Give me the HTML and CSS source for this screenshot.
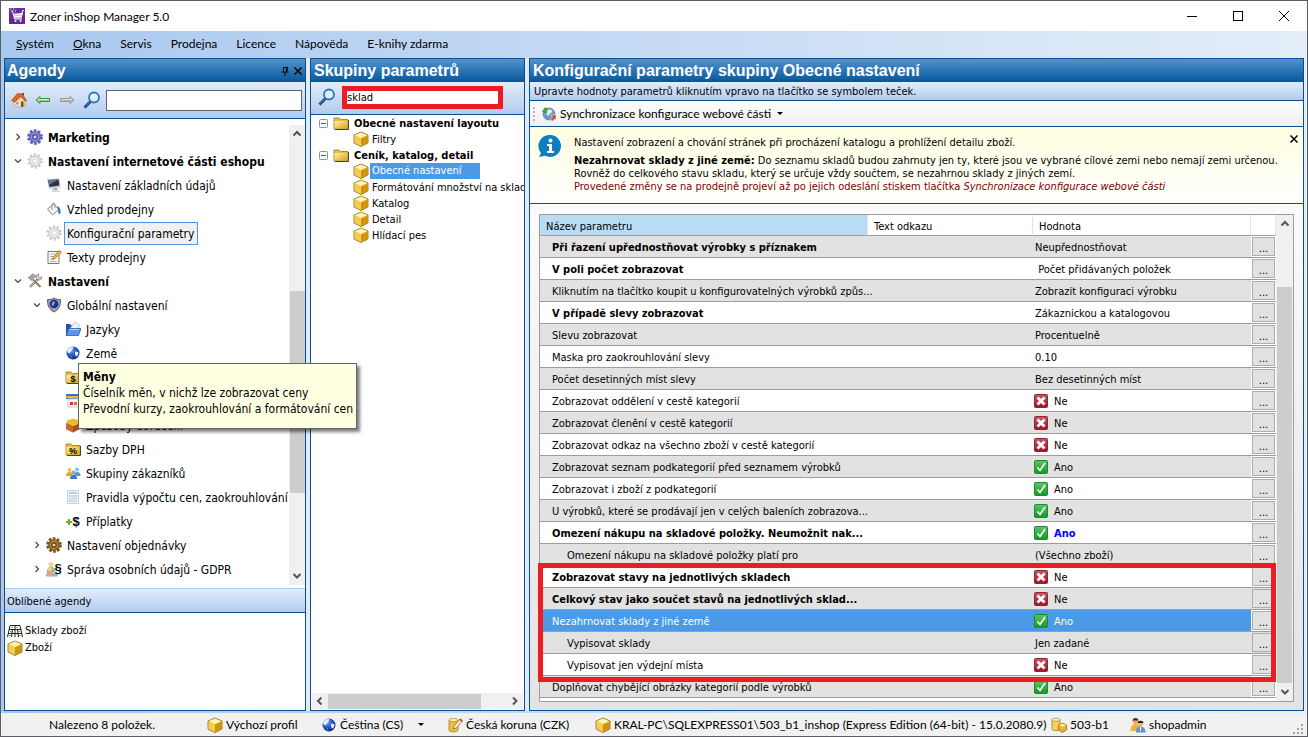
FILE: index.html
```html
<!DOCTYPE html>
<html lang="cs">
  <head>
    <meta charset="UTF-8" />
    <meta name="viewport" content="width=device-width, initial-scale=1.0" />
    <title>Zoner inShop Manager 5.0</title>
    <link rel="stylesheet" href="styles.css">
  </head>
  <body>
    <!-- icon sprite -->
    <svg class="sprite" width="0" height="0" aria-hidden="true">
      <defs>
        <linearGradient id="gGold" x1="0" y1="0" x2="1" y2="1"><stop offset="0" stop-color="#fff3a8"/><stop offset="1" stop-color="#d9a11c"/></linearGradient>
        <linearGradient id="gRed" x1="0" y1="0" x2="0" y2="1"><stop offset="0" stop-color="#c55a66"/><stop offset="1" stop-color="#9c1424"/></linearGradient>
        <linearGradient id="gGreen" x1="0" y1="0" x2="0" y2="1"><stop offset="0" stop-color="#5fc46a"/><stop offset="1" stop-color="#129a22"/></linearGradient>
        <radialGradient id="gGlobe" cx="0.35" cy="0.3" r="0.8"><stop offset="0" stop-color="#7fb0f0"/><stop offset="0.5" stop-color="#1f55c0"/><stop offset="1" stop-color="#08206c"/></radialGradient>
      </defs>
      <symbol id="cart" viewBox="0 0 16 16">
        <rect width="16" height="16" fill="#6f2f9f"/><path d="M0 16V6L16 0v16z" fill="#5a1f8c" opacity=".5"/>
        <path d="M4.5 6.500 5.500 10.500h7l1.500-6" fill="#d9c6ea"/><path d="M2 3h1.500l2 8h7.500M5 6h8.500M5.500 8.500h7.500M15 2.500h-1.500l-.8 5" fill="none" stroke="#fff"/>
        <circle cx="6.500" cy="13" r="1" fill="#fff"/><circle cx="11.500" cy="13" r="1" fill="#fff"/><path d="M1 1h1M4 1h1M6 3h1" stroke="#fff"/>
      </symbol>
      <symbol id="home" viewBox="0 0 16 16">
        <path d="M3 8.500 9 4l5 4.500V14l-6 1.500L3 13z" fill="#f4e0b8" stroke="#b98f58" stroke-width=".6"/>
        <path d="M.5 8.500 6.500 1.500 11 2l4.500 6.500-1.200.8L10 4.500 4 10z" fill="#e06a25" stroke="#8e3410" stroke-width=".6"/>
        <path d="M10 9.500h2.500v5L10 15z" fill="#7a4a1e"/><path d="M5 10h2.500v2.500H5z" fill="#7fa6cf"/><path d="M11 1h2v3l-2-1.500z" fill="#9e3a17"/>
      </symbol>
      <symbol id="back" viewBox="0 0 16 16"><path d="M1 8 5 4.500V6.500h9.500v3H5V11.500z" fill="#8fd07c" stroke="#3f9436"/><path d="M3 7.500h11" stroke="#d5f3cb"/></symbol>
      <symbol id="forward" viewBox="0 0 16 16"><path d="M15 8 11 4.500V6.500H1.500v3H11V11.500z" fill="#b8b8b8" stroke="#989898"/><path d="M2 7.500h11" stroke="#dcdcdc"/></symbol>
      <symbol id="magnifier" viewBox="0 0 18 18">
        <path d="M1.500 16.500 8 10" stroke="#22437a" stroke-width="3"/><path d="M2 15.500 7.500 10" stroke="#5c88bd"/>
        <circle cx="11" cy="6.500" r="5" fill="#dcecfa" stroke="#2a78b8" stroke-width="1.800"/><path d="M8.500 5.500a3 3 0 0 1 3-2" stroke="#fff" fill="none"/>
      </symbol>
      <symbol id="gear" viewBox="0 0 16 16">
        <circle cx="8" cy="8" r="6.500" fill="none" stroke="currentColor" stroke-width="2.600" stroke-dasharray="2.700 1.384"/>
        <circle cx="8" cy="8" r="5.800" fill="currentColor"/><circle cx="8" cy="8" r="3.800" fill="none" stroke="#fff" stroke-opacity=".4" stroke-width="1.200"/><circle cx="8" cy="8" r="1.300" fill="#fff" fill-opacity=".8"/>
      </symbol>
      <symbol id="gearLight" viewBox="0 0 16 16">
        <circle cx="8" cy="8" r="6.500" fill="none" stroke="#c9c9c9" stroke-width="2.400" stroke-dasharray="2.100 1.980"/>
        <circle cx="8" cy="8" r="5" fill="#f1f1f1" stroke="#cdcdcd" stroke-width="1.400"/><circle cx="8" cy="8" r="2.400" fill="#fff" stroke="#d0d0d0"/>
      </symbol>
      <symbol id="monitor" viewBox="0 0 16 16">
        <path d="M1 2 13.500 1.500l1 9L3 12z" fill="#c9ced6"/><path d="M2 3 12.600 2.500l.8 6L3.500 10z" fill="#2a3444"/><path d="M2 3 12.600 2.500 3 8z" fill="#66758a"/>
        <path d="M8 11h3l1 2.500H6.500z" fill="#a9afb8"/><path d="M5 13.500h9V15H6z" fill="#d4d8dd"/>
      </symbol>
      <symbol id="bucket" viewBox="0 0 16 16">
        <path d="M1.500 8 8 3l5 5.500L6.500 14z" fill="#f4f4f4" stroke="#8b8b8b"/><path d="M6 9V3.500a1.500 1.500 0 0 1 3 0V7" fill="none" stroke="#999"/>
        <path d="M11 5.500c2 0 4 1.500 3.500 7L12.500 13l-.500-4z" fill="#3e6fb2"/>
      </symbol>
      <symbol id="note" viewBox="0 0 16 16">
        <path d="M2 2.500h11v12H2z" fill="#fff" stroke="#777"/><path d="M4 5h7M4 7.500h5M4 10h4M4 12.500h7" stroke="#aaa"/>
        <path d="m6.500 10.500.8-2.500 6-6.500 2 1.800-6.300 6.500z" fill="#f2b93c" stroke="#966b16" stroke-width=".7"/><path d="m12.500 2.200 1-1.200 2 1.800-1 1.200z" fill="#d88"/>
      </symbol>
      <symbol id="tools" viewBox="0 0 16 16">
        <path d="M3 14 12 5" stroke="#6d6d6d" stroke-width="2.400"/><path d="M3 14 12 5" stroke="#dcdcdc"/><path d="M15 3.500a3 3 0 1 1-3-2.500l-.5 2.500 1.500 1z" fill="#d0d0d0" stroke="#777" stroke-width=".6"/>
        <path d="M6 6.500 13.500 14" stroke="#9b7a5e" stroke-width="2"/><path d="m1 5 4.500-4L9 3 4 7.500 3 5.500z" fill="#a9a9a9" stroke="#555" stroke-width=".5"/>
      </symbol>
      <symbol id="shield" viewBox="0 0 16 16">
        <path d="M8 1c2 1.500 4 1.500 6.500 1.500 0 6-1.500 10-6.500 12.500C3 12.500 1.500 8.500 1.500 2.500 4 2.500 6 2.500 8 1z" fill="#9da1a8" stroke="#575b63"/>
        <circle cx="8" cy="7" r="4.300" fill="#1b2f88"/><path d="M6 5.500c1-1.500 3-1.500 3 0s-1.500 1-1 2.500-2 1-2.500-.5z" fill="#7fa2e4"/>
      </symbol>
      <symbol id="blueFolder" viewBox="0 0 16 16">
        <path d="M1 3h4l1.500 1.500H13V14H1z" fill="#2356b4"/><path d="M4.500 8 10 1l4.500 3-3 6z" fill="#eef5ff" stroke="#7da5d9" stroke-width=".6"/><path d="M3.500 7.500H16L13.500 14.500H1z" fill="#5a97e6" stroke="#1f4e9e" stroke-width=".7"/><path d="M4.500 8.500h9" stroke="#b9d6fa"/>
      </symbol>
      <symbol id="globe" viewBox="0 0 16 16">
        <circle cx="8" cy="8" r="6.500" fill="url(#gGlobe)"/><path d="M2 5.500C3.500 3 6 1.700 8 2c.8 1-.5 2-1 3S5.500 7 4.500 8 2.500 7.500 2 5.500zM10 7c1-1 2.500-.5 3.500.5 0 2-.8 3-2 4-1.500.5-.500-1.500-1.500-2zM6 11.500c1 0 1.500.500 1 1.500z" fill="#e3eefc"/>
      </symbol>
      <symbol id="folder" viewBox="0 0 16 16">
        <path d="M1 4V3h5l1.500 1.500H15V14H1z" fill="#edbd42" stroke="#9a7420" stroke-width=".8"/><path d="M1.500 6h13v7.500h-13z" fill="url(#gGold)"/><path d="M15.500 5v9.500H2" fill="none" stroke="#444"/>
      </symbol>
      <symbol id="card" viewBox="0 0 16 16">
        <path d="M1 1h14v5H1z" fill="#3a6fd0"/><path d="M1 3h14v2H1z" fill="#f3b51e"/><path d="M3 6h12v8H3z" fill="#f4f4f4" stroke="#ccc"/><path d="M5 9h3v3H5z" fill="#d7342d"/><path d="M9 9h3v3H9z" fill="#e5662a"/>
      </symbol>
      <symbol id="openBox" viewBox="0 0 16 16">
        <path d="M1 6 8 9l7-3v6l-7 3.500L1 12z" fill="#a9501c"/><path d="m2 3.500 6-2 6 2v3L8 9 2 6.500z" fill="#f0bb2a"/><path d="M1 6 8 9v6.500L1 12z" fill="#c76a2a"/>
      </symbol>
      <symbol id="people" viewBox="0 0 16 16">
        <circle cx="4.500" cy="5" r="2" fill="#f2c14a"/><path d="M1 11c0-3 1.500-4 3.500-4s3.500 1 3.500 4z" fill="#efa51b"/>
        <circle cx="12" cy="4.500" r="2" fill="#8ab9ec"/><path d="M9 11c0-3 1-4 3.200-4S15.500 8 15.500 11z" fill="#5b95d8"/>
        <circle cx="8.500" cy="7.500" r="2" fill="#7cb0ea"/><path d="M5 14c0-3 1.500-4 3.500-4s3.500 1 3.500 4z" fill="#3577c8"/>
      </symbol>
      <symbol id="calc" viewBox="0 0 16 16">
        <path d="M2.500 1.500h11v13h-11z" fill="#f3f5f8" stroke="#c6ced9"/><path d="M4 3h8v2H4z" fill="#b8cfe4"/><path d="M4 7h8M4 9.500h8M4 12h8" stroke="#b3c5d8" stroke-width="1.500" stroke-dasharray="1.500 .7"/>
      </symbol>
      <symbol id="shelves" viewBox="0 0 16 16">
        <path d="M3 2.500h10M2 6.500h12M1 10.500h14M3 2.500 .500 14M8 2.500V14M13 2.500l2.500 11.500M5.500 6.500 4.500 14M10.500 6.500l1 7.500" stroke="#222" fill="none"/><path d="M4 4.500h2M9 4.500h2M3 8.500h2M7 8.500h2M11 8.500h2M2 12.500h2M7 12.500h2M12 12.500h2" stroke="#999"/>
      </symbol>
      <symbol id="box" viewBox="0 0 16 16">
        <path d="M8 1 15 4v8l-7 3.500L1 12V4z" fill="#e7b52c" stroke="#8b6510" stroke-width=".8"/><path d="M8 1.500 14.500 4.200 8 7.200 1.500 4.200z" fill="#fff3ae"/><path d="M1.500 4.500 8 7.500V15l-6.500-3.200z" fill="#f2cd51"/><path d="M14.500 4.500 8 7.500V15l6.500-3.200z" fill="#cf9413"/>
      </symbol>
      <symbol id="yes" viewBox="0 0 16 16">
        <rect x="1.500" y="1.500" width="13" height="13" rx="1" fill="url(#gGreen)" stroke="#1d8a2b"/><path d="m4.500 8.500 2.500 3L12 4" fill="none" stroke="#fff" stroke-width="1.600"/>
      </symbol>
      <symbol id="no" viewBox="0 0 16 16">
        <rect x="1.500" y="1.500" width="13" height="13" rx="1" fill="url(#gRed)" stroke="#93232f"/><path d="m4.500 4.500 7 7M11.500 4.500l-7 7" stroke="#fff" stroke-width="2.800"/>
      </symbol>
      <symbol id="sync" viewBox="0 0 16 16">
        <circle cx="8" cy="8" r="6" fill="#6f9bcb" stroke="#49698e" stroke-width=".6"/><path d="M5 5c2-2 5-2 6 0s-3 2-3 4-3 0-3-4z" fill="#e9f1f9"/><path d="M1 5.500 4 1l4 3-2 .5.500 2.500L3 7z" fill="#48a23c"/>
        <path d="M10 9h5v5l-1.500-1-2.500 2.500L9.500 13l2-1.500z" fill="#d7452c" stroke="#fff" stroke-width=".5"/>
      </symbol>
      <symbol id="info" viewBox="0 0 24 24">
        <path d="M12 1a11 11 0 1 1-5 20.800L1 23l2-4A11 11 0 0 1 12 1z" fill="#0c7dc0"/><circle cx="12.500" cy="6.500" r="2" fill="#fff"/><path d="M9 10h5v7h2v2H9v-2h2v-5H9z" fill="#fff"/>
      </symbol>
      <symbol id="dbPencil" viewBox="0 0 16 16">
        <path d="M2 3v10c0 2.500 9 2.500 9 0V3z" fill="#eabf49" stroke="#94701b" stroke-width=".7"/><ellipse cx="6.500" cy="3" rx="4.500" ry="1.700" fill="#fff1b2" stroke="#94701b" stroke-width=".6"/><path d="m6 12 1-3 6-7 2.500 2-6 7z" fill="#fbe9b5" stroke="#8a6320" stroke-width=".7"/><path d="m12.200 2.800 1-1.300 2.500 2-1 1.300z" fill="#c34"/>
      </symbol>
      <symbol id="dbBox" viewBox="0 0 16 16">
        <path d="M1 2.500v9.500c0 2.200 8 2.200 8 0V2.500z" fill="#f1cf64" stroke="#94701b" stroke-width=".7"/><ellipse cx="5" cy="2.700" rx="4" ry="1.600" fill="#fff4c4" stroke="#94701b" stroke-width=".6"/>
        <path d="m11.500 6 4 2v5l-4 2.500-4-2.500V8z" fill="#e7b52c" stroke="#8b6510" stroke-width=".7"/><path d="m11.500 6.500 3.500 1.700-3.500 1.800L8 8.200z" fill="#fff0a0"/>
      </symbol>
      <symbol id="users" viewBox="0 0 16 16">
        <circle cx="5.500" cy="4" r="3" fill="#e2ab78"/><path d="M2.500 3.500C3 0 8 0 8.500 3.500z" fill="#4a2c14"/><path d="M.500 14c0-5 2-7 5-7s5 2 5 7z" fill="#eeb42d"/>
        <circle cx="10.500" cy="6.500" r="2.800" fill="#e8b688"/><path d="M7.500 6C8 3 13 3 13.500 6z" fill="#2c1c10"/><path d="M6 15.500c0-4.500 2-6 4.500-6s5 1.500 5 6z" fill="#5c94da"/><path d="M10.500 10v4" stroke="#fff"/>
      </symbol>
      <symbol id="right" viewBox="0 0 8 8"><path d="m2.500 1 3 3-3 3" fill="none" stroke="#444" stroke-width="1.200"/></symbol>
      <symbol id="down" viewBox="0 0 8 8"><path d="m1 2.500 3 3 3-3" fill="none" stroke="#444" stroke-width="1.200"/></symbol>
      <symbol id="thickUp" viewBox="0 0 10 10"><path d="m1.500 6.500 3.500-3.500 3.500 3.500" fill="none" stroke="#555" stroke-width="2"/></symbol>
      <symbol id="thickDown" viewBox="0 0 10 10"><path d="m1.500 3 3.500 3.500L8.500 3" fill="none" stroke="#555" stroke-width="2"/></symbol>
      <symbol id="thickLeft" viewBox="0 0 10 10"><path d="M6.500 1.500 3 5l3.500 3.500" fill="none" stroke="#555" stroke-width="2"/></symbol>
      <symbol id="thickRight" viewBox="0 0 10 10"><path d="M3 1.500 6.500 5 3 8.500" fill="none" stroke="#555" stroke-width="2"/></symbol>
      <symbol id="minus" viewBox="0 0 9 9"><rect x=".5" y=".5" width="8" height="8" rx="1" fill="#f8f8f8" stroke="#919191"/><path d="M2 4.500h5" stroke="#3a5fae"/></symbol>
      <symbol id="cross" viewBox="0 0 10 10"><path d="m1.500 1.500 7 7M8.500 1.500l-7 7" stroke="#000" stroke-width="1.500"/></symbol>
      <symbol id="pin" viewBox="0 0 10 10"><path d="M3 1.500h4.500M3.500 1.500v4M6.500 1v4.500M7.200 1v4.500M1.500 6h7M5 6v4" stroke="#000"/></symbol>
      <symbol id="winMin" viewBox="0 0 12 12"><path d="M1 6.500h10" stroke="#000"/></symbol>
      <symbol id="winMax" viewBox="0 0 12 12"><rect x="1.500" y="1.500" width="9" height="9" fill="none" stroke="#000"/></symbol>
      <symbol id="winClose" viewBox="0 0 12 12"><path d="m1 1 10 10M11 1 1 11" stroke="#000"/></symbol>
    </svg>

    <header class="titlebar">
      <svg class="icon"><use href="#cart"/></svg>
      <h1>Zoner inShop Manager 5.0</h1>
      <div class="window-buttons">
        <button aria-label="Minimalizovat"><svg><use href="#winMin"/></svg></button>
        <button aria-label="Maximalizovat"><svg><use href="#winMax"/></svg></button>
        <button aria-label="Zavřít"><svg><use href="#winClose"/></svg></button>
      </div>
    </header>

    <nav class="menubar">
      <a href="#"><u>S</u>ystém</a>
      <a href="#"><u>O</u>kna</a>
      <a href="#">Servis</a>
      <a href="#">Prodejna</a>
      <a href="#">Licence</a>
      <a href="#">Nápověda</a>
      <a href="#">E-knihy zdarma</a>
    </nav>

    <main class="workspace">
      <section class="panel agendas">
        <header class="panel-header">
          <h2>Agendy</h2>
          <button aria-label="Připnout"><svg><use href="#pin"/></svg></button>
          <button aria-label="Zavřít panel"><svg><use href="#cross"/></svg></button>
        </header>
        <div class="searchbar">
          <button aria-label="Domů"><svg class="icon"><use href="#home"/></svg></button>
          <button aria-label="Zpět"><svg class="icon"><use href="#back"/></svg></button>
          <button aria-label="Vpřed"><svg class="icon"><use href="#forward"/></svg></button>
          <label for="agendaSearch" aria-label="Hledat agendu"><svg class="magnifier"><use href="#magnifier"/></svg></label>
          <input type="text" id="agendaSearch">
        </div>
        <div class="tree-wrap">
          <ul class="tree">
            <li class="top"><svg class="arrow"><use href="#right"/></svg><svg class="icon violet"><use href="#gear"/></svg><a href="#">Marketing</a></li>
            <li class="top"><svg class="arrow"><use href="#down"/></svg><svg class="icon"><use href="#gearLight"/></svg><a href="#">Nastavení internetové části eshopu</a></li>
            <li class="sub"><span class="arrow"></span><svg class="icon"><use href="#monitor"/></svg><a href="#">Nastavení základních údajů</a></li>
            <li class="sub"><span class="arrow"></span><svg class="icon"><use href="#bucket"/></svg><a href="#">Vzhled prodejny</a></li>
            <li class="sub current"><span class="arrow"></span><svg class="icon"><use href="#gearLight"/></svg><a href="#">Konfigurační parametry</a></li>
            <li class="sub"><span class="arrow"></span><svg class="icon"><use href="#note"/></svg><a href="#">Texty prodejny</a></li>
            <li class="top"><svg class="arrow"><use href="#down"/></svg><svg class="icon"><use href="#tools"/></svg><a href="#">Nastavení</a></li>
            <li class="sub"><svg class="arrow"><use href="#down"/></svg><svg class="icon"><use href="#shield"/></svg><a href="#">Globální nastavení</a></li>
            <li class="leaf"><svg class="icon"><use href="#blueFolder"/></svg><a href="#">Jazyky</a></li>
            <li class="leaf"><svg class="icon"><use href="#globe"/></svg><a href="#">Země</a></li>
            <li class="leaf has-tip">
              <svg class="icon" viewBox="0 0 16 16"><use href="#folder"/><text x="8" y="13" class="glyph" text-anchor="middle">$</text></svg>
              <div class="tooltip" role="tooltip">
                <strong>Měny</strong>
                <p>Číselník měn, v nichž lze zobrazovat ceny</p>
                <p>Převodní kurzy, zaokrouhlování a formátování cen</p>
              </div>
            </li>
            <li class="leaf"><svg class="icon"><use href="#card"/></svg></li>
            <li class="leaf"><svg class="icon"><use href="#openBox"/></svg><a href="#">Způsoby doručení</a></li>
            <li class="leaf"><svg class="icon" viewBox="0 0 16 16"><use href="#folder"/><text x="8" y="13" class="glyph" text-anchor="middle">%</text></svg><a href="#">Sazby DPH</a></li>
            <li class="leaf"><svg class="icon"><use href="#people"/></svg><a href="#">Skupiny zákazníků</a></li>
            <li class="leaf"><svg class="icon"><use href="#calc"/></svg><a href="#">Pravidla výpočtu cen, zaokrouhlování</a></li>
            <li class="leaf"><svg class="icon" viewBox="0 0 16 16"><path d="M1 9h6M4 6v6" stroke="#5fb336" stroke-width="2"/><text x="11" y="13" class="glyph glyph-big" text-anchor="middle">$</text></svg><a href="#">Příplatky</a></li>
            <li class="sub"><svg class="arrow"><use href="#right"/></svg><svg class="icon brown"><use href="#gear"/></svg><a href="#">Nastavení objednávky</a></li>
            <li class="sub"><svg class="arrow"><use href="#right"/></svg><svg class="icon" viewBox="0 0 16 16"><circle cx="5" cy="3.500" r="2.500" fill="#f3cfa8"/><path d="M1 11c0-4 1.500-5 4-5s4 1 4 5z" fill="#7fc274"/><circle cx="4" cy="8.500" r="2" fill="#f3cfa8"/><path d="M0 15.500c0-4 1.500-5 4-5s4 1 4 5z" fill="#ef9b86"/><path d="M6 15.500c0-3 1-4 3-4s3 1 3 4z" fill="#8ab5e8"/><text x="12" y="12" class="glyph glyph-big" text-anchor="middle">§</text></svg><a href="#">Správa osobních údajů - GDPR</a></li>
          </ul>
          <div class="scroll scroll-tree">
            <svg><use href="#thickUp"/></svg><i class="before"></i><i class="thumb"></i><i class="after"></i><svg><use href="#thickDown"/></svg>
          </div>
        </div>
        <h3 class="favorites-title">Oblíbené agendy</h3>
        <ul class="favorites">
          <li><svg class="icon"><use href="#shelves"/></svg><a href="#">Sklady zboží</a></li>
          <li><svg class="icon"><use href="#box"/></svg><a href="#">Zboží</a></li>
        </ul>
      </section>

      <section class="panel groups">
        <header class="panel-header"><h2>Skupiny parametrů</h2></header>
        <div class="searchbar">
          <label for="groupSearch" aria-label="Hledat parametr"><svg class="magnifier"><use href="#magnifier"/></svg></label>
          <input type="text" id="groupSearch" value="sklad">
        </div>
        <ul class="group-tree">
          <li class="root"><svg class="toggle"><use href="#minus"/></svg><svg class="icon"><use href="#folder"/></svg><a href="#">Obecné nastavení layoutu</a></li>
          <li><svg class="icon"><use href="#box"/></svg><a href="#">Filtry</a></li>
          <li class="root"><svg class="toggle"><use href="#minus"/></svg><svg class="icon"><use href="#folder"/></svg><a href="#">Ceník, katalog, detail</a></li>
          <li class="selected"><svg class="icon"><use href="#box"/></svg><a href="#">Obecné nastavení</a></li>
          <li><svg class="icon"><use href="#box"/></svg><a href="#">Formátování množství na skladě</a></li>
          <li><svg class="icon"><use href="#box"/></svg><a href="#">Katalog</a></li>
          <li><svg class="icon"><use href="#box"/></svg><a href="#">Detail</a></li>
          <li><svg class="icon"><use href="#box"/></svg><a href="#">Hlídací pes</a></li>
        </ul>
        <div class="scroll scroll-groups">
          <svg><use href="#thickLeft"/></svg><i class="thumb"></i><i class="after"></i><svg><use href="#thickRight"/></svg>
        </div>
      </section>

      <section class="panel params">
        <header class="panel-header"><h2>Konfigurační parametry skupiny Obecné nastavení</h2></header>
        <p class="hint">Upravte hodnoty parametrů kliknutím vpravo na tlačítko se symbolem teček.</p>
        <div class="toolbar">
          <span class="grip"></span>
          <button><svg class="icon"><use href="#sync"/></svg>Synchronizace konfigurace webové části<span class="caret"></span></button>
        </div>
        <div class="info">
          <svg class="info-icon"><use href="#info"/></svg>
          <div class="info-text">
            <p class="lead">Nastavení zobrazení a chování stránek při procházení katalogu a prohlížení detailu zboží.</p>
            <p><b>Nezahrnovat sklady z jiné země:</b> Do seznamu skladů budou zahrnuty jen ty, které jsou ve vybrané cílové zemi nebo nemají zemi určenou.</p>
            <p>Rovněž do celkového stavu skladu, který se určuje vždy součtem, se nezahrnou sklady z jiných zemí.</p>
            <p class="warning">Provedené změny se na prodejně projeví až po jejich odeslání stiskem tlačítka <em>Synchronizace konfigurace webové části</em></p>
          </div>
          <button aria-label="Zavřít nápovědu"><svg><use href="#cross"/></svg></button>
        </div>
        <div class="grid-area">
          <div class="grid">
            <table>
              <colgroup><col class="col-name"><col class="col-link"><col><col class="col-button"></colgroup>
              <thead>
                <tr><th class="sorted">Název parametru</th><th>Text odkazu</th><th>Hodnota</th><th></th></tr>
              </thead>
              <tbody>
                <tr><td><b>Při řazení upřednostňovat výrobky s příznakem</b></td><td></td><td>Neupřednostňovat</td><td><button>...</button></td></tr>
                <tr><td><b>V poli počet zobrazovat</b></td><td></td><td>&nbsp;Počet přidávaných položek</td><td><button>...</button></td></tr>
                <tr><td>Kliknutím na tlačítko koupit u konfigurovatelných výrobků způs...</td><td></td><td>Zobrazit konfiguraci výrobku</td><td><button>...</button></td></tr>
                <tr><td><b>V případě slevy zobrazovat</b></td><td></td><td>Zákaznickou a katalogovou</td><td><button>...</button></td></tr>
                <tr><td>Slevu zobrazovat</td><td></td><td>Procentuelně</td><td><button>...</button></td></tr>
                <tr><td>Maska pro zaokrouhlování slevy</td><td></td><td>0.10</td><td><button>...</button></td></tr>
                <tr><td>Počet desetinných míst slevy</td><td></td><td>Bez desetinných míst</td><td><button>...</button></td></tr>
                <tr><td>Zobrazovat oddělení v cestě kategorií</td><td></td><td><span class="flag"><svg class="icon"><use href="#no"/></svg>Ne</span></td><td><button>...</button></td></tr>
                <tr><td>Zobrazovat členění v cestě kategorií</td><td></td><td><span class="flag"><svg class="icon"><use href="#no"/></svg>Ne</span></td><td><button>...</button></td></tr>
                <tr><td>Zobrazovat odkaz na všechno zboží v cestě kategorií</td><td></td><td><span class="flag"><svg class="icon"><use href="#no"/></svg>Ne</span></td><td><button>...</button></td></tr>
                <tr><td>Zobrazovat seznam podkategorií před seznamem výrobků</td><td></td><td><span class="flag"><svg class="icon"><use href="#yes"/></svg>Ano</span></td><td><button>...</button></td></tr>
                <tr><td>Zobrazovat i zboží z podkategorií</td><td></td><td><span class="flag"><svg class="icon"><use href="#yes"/></svg>Ano</span></td><td><button>...</button></td></tr>
                <tr><td>U výrobků, které se prodávají jen v celých baleních zobrazova...</td><td></td><td><span class="flag"><svg class="icon"><use href="#yes"/></svg>Ano</span></td><td><button>...</button></td></tr>
                <tr><td><b>Omezení nákupu na skladové položky. Neumožnit nak...</b></td><td></td><td class="changed"><span class="flag"><svg class="icon"><use href="#yes"/></svg>Ano</span></td><td><button>...</button></td></tr>
                <tr><td class="nested">Omezení nákupu na skladové položky platí pro</td><td></td><td>(Všechno zboží)</td><td><button>...</button></td></tr>
              </tbody>
              <tbody class="marked">
                <tr><td><b>Zobrazovat stavy na jednotlivých skladech</b></td><td></td><td><span class="flag"><svg class="icon"><use href="#no"/></svg>Ne</span></td><td><button>...</button></td></tr>
                <tr><td><b>Celkový stav jako součet stavů na jednotlivých sklad...</b></td><td></td><td><span class="flag"><svg class="icon"><use href="#no"/></svg>Ne</span></td><td><button>...</button></td></tr>
                <tr class="selected"><td>Nezahrnovat sklady z jiné země</td><td></td><td><span class="flag"><svg class="icon"><use href="#yes"/></svg>Ano</span></td><td><button>...</button></td></tr>
                <tr><td class="nested">Vypisovat sklady</td><td></td><td>Jen zadané</td><td><button>...</button></td></tr>
                <tr><td class="nested">Vypisovat jen výdejní místa</td><td></td><td><span class="flag"><svg class="icon"><use href="#no"/></svg>Ne</span></td><td><button>...</button></td></tr>
              </tbody>
              <tbody>
                <tr><td>Doplňovat chybějící obrázky kategorií podle výrobků</td><td></td><td><span class="flag"><svg class="icon"><use href="#yes"/></svg>Ano</span></td><td><button>...</button></td></tr>
              </tbody>
            </table>
            <div class="scroll scroll-grid">
              <svg><use href="#thickUp"/></svg><i class="before"></i><i class="thumb"></i><svg><use href="#thickDown"/></svg>
            </div>
          </div>
        </div>
      </section>
    </main>

    <footer class="statusbar">
      <span class="found">Nalezeno 8 položek.</span>
      <span><svg class="icon"><use href="#box"/></svg>Výchozí profil</span>
      <span><svg class="icon"><use href="#globe"/></svg>Čeština (CS)<i class="caret"></i></span>
      <span><svg class="icon"><use href="#dbPencil"/></svg>Česká koruna (CZK)</span>
      <span><svg class="icon"><use href="#box"/></svg>KRAL-PC\SQLEXPRESS01\503_b1_inshop (Express Edition (64-bit) - 15.0.2080.9)</span>
      <span><svg class="icon"><use href="#dbBox"/></svg>503-b1</span>
      <span><svg class="icon"><use href="#users"/></svg>shopadmin</span>
      <svg class="resize" viewBox="0 0 12 12"><path d="M9 1h2M5 5h2M9 5h2M1 9h2M5 9h2M9 9h2" stroke="#a5a5a5" stroke-width="2"/></svg>
    </footer>
  </body>
</html>
```

FILE: styles.css
```css
/* styles.css */
* {
  box-sizing: border-box;
}

body {
  margin: 0;
  height: 100vh;
  display: flex;
  flex-direction: column;
  overflow: hidden;
  border: 1px solid #5c5c66;
  background: linear-gradient(to right, #a9c8ef, #e4eef9);
  font-family: "DejaVu Sans Condensed", "DejaVu Sans", sans-serif;
  font-size: 11px;
  color: #000;
}

h1, h2, h3, p, ul {
  margin: 0;
  padding: 0;
  font-weight: normal;
  list-style: none;
}

a {
  color: inherit;
  text-decoration: none;
}

svg {
  display: block;
  flex: none;
}

button {
  padding: 0;
  border: none;
  background: none;
  font: inherit;
  color: inherit;
  flex: none;
}

.sprite {
  position: absolute;
}

.icon {
  width: 16px;
  height: 16px;
}

.glyph {
  font: bold 9px "Liberation Sans", sans-serif;
}

.glyph-big {
  font-size: 13px;
}

.caret {
  border: 3px solid transparent;
  border-top-color: #000;
  border-bottom: none;
}

/* title bar and menu */
.titlebar {
  display: flex;
  align-items: center;
  height: 30px;
  padding-left: 8px;
  background: #fff;
  flex: none;
}

.titlebar h1 {
  flex: 1;
  padding-left: 5px;
  font: 12px Lato, sans-serif;
}

.window-buttons {
  display: flex;
}

.window-buttons button {
  width: 46px;
  height: 30px;
  display: grid;
  place-items: center;
}

.window-buttons svg {
  width: 12px;
  height: 12px;
}

.menubar {
  display: flex;
  align-items: center;
  gap: 19px;
  height: 27px;
  padding: 0 15px 3px;
  font: 12px Lato, sans-serif;
  flex: none;
}

/* panels */
.workspace {
  flex: 1;
  min-height: 0;
  display: grid;
  grid-template-columns: 302px 215px 1fr;
  gap: 4px;
  margin: 0 3px 2px;
  background: #e0eaf8;
}

.panel {
  display: flex;
  flex-direction: column;
  min-width: 0;
  min-height: 0;
  border: 1px solid #0a4f94;
  background: #fff;
}

.panel-header {
  display: flex;
  align-items: center;
  gap: 3px;
  height: 23px;
  padding: 0 2px;
  background: linear-gradient(#5193d0, #05579a);
  flex: none;
}

.groups .panel-header,
.params .panel-header {
  padding-left: 3px;
}

.panel-header h2 {
  flex: 1;
  font: bold 16px "Liberation Sans", Arial, sans-serif;
  color: #fff;
  white-space: nowrap;
}

.panel-header svg,
.info button svg {
  width: 10px;
  height: 10px;
}

.searchbar {
  display: flex;
  align-items: center;
  gap: 8px;
  height: 37px;
  padding: 0 3px 0 6px;
  background: linear-gradient(#e3edfb, #b1cbee);
  border-bottom: 1px solid #0a4f94;
  flex: none;
}

.searchbar input {
  flex: 1;
  min-width: 0;
  height: 21px;
  margin-left: -3px;
  padding: 0 2px;
  border: 1px solid #646464;
  background: #fff;
  font: inherit;
}

.magnifier {
  width: 18px;
  height: 18px;
}

/* agenda tree */
.tree-wrap {
  display: flex;
  flex: 1;
  min-height: 0;
  padding: 6px 0 3px;
}

.tree {
  flex: 1;
  min-width: 0;
  font-size: 12px;
}

.tree li {
  display: flex;
  align-items: center;
  height: 24px;
  padding-left: 9px;
  white-space: nowrap;
}

.tree .sub {
  padding-left: 28px;
}

.tree .leaf {
  padding-left: 60px;
}

.tree .arrow {
  width: 8px;
  height: 8px;
  margin-right: 5px;
}

.tree a {
  margin-left: 3px;
  padding: 4px 2px 2px;
}

.tree .top {
  font-weight: bold;
}

.tree .current a {
  margin-left: 2px;
  border: 1px solid #4a98e0;
  background: #f0f0f0;
  padding: 4px 3px 3px 2px;
}

.violet {
  color: #5a5cb8;
}

.brown {
  color: #7d5208;
}

.has-tip {
  position: relative;
}

.tooltip {
  position: absolute;
  z-index: 2;
  left: 73px;
  top: -2px;
  padding: 5px 3px 11px 4px;
  border: 1px solid #646464;
  background: #ffffe1;
  box-shadow: 3px 3px 3px rgba(0, 0, 0, 0.5);
  font-size: 12px;
  line-height: 16px;
}

.favorites-title {
  height: 25px;
  padding-left: 2px;
  border-top: 1px solid #a9c8ef;
  border-bottom: 1px solid #0a4f94;
  background: linear-gradient(#e3edfb, #b1cbee);
  font-size: 11px;
  line-height: 25px;
  flex: none;
}

.favorites {
  height: 97px;
  padding: 9px 2px;
  flex: none;
}

.favorites li {
  display: flex;
  align-items: center;
  gap: 2px;
  height: 17px;
}

/* scrollbars */
.scroll {
  display: flex;
  flex-direction: column;
  align-items: center;
  width: 16px;
  background: #f0f0f0;
  flex: none;
}

.scroll svg {
  width: 10px;
  height: 10px;
  margin: 4px 3px;
}

.thumb {
  width: 15px;
  background: #cdcdcd;
}

.scroll-tree .before {
  flex: 148;
}

.scroll-tree .thumb {
  flex: 202;
}

.scroll-tree .after {
  flex: 74;
}

.scroll-groups {
  flex-direction: row;
  width: auto;
  height: 16px;
  margin: 0 1px 1px;
}

.scroll-groups .thumb {
  width: auto;
  height: 15px;
  flex: 152;
}

.scroll-groups .after {
  flex: 26;
}

.scroll-grid {
  width: 17px;
}

.scroll-grid .before {
  flex: 54;
}

.scroll-grid .thumb {
  flex: 396;
}

/* parameter groups */
.groups .searchbar {
  height: 33px;
  padding: 0 21px 2px 7px;
  gap: 9px;
}

.groups .searchbar input {
  height: 23px;
  border: 5px solid #ed1c24;
  padding: 0;
  margin-left: -3px;
}

.group-tree {
  flex: 1;
  min-height: 0;
  overflow: hidden;
}

.group-tree li {
  display: flex;
  align-items: center;
  gap: 1px;
  height: 16px;
  padding-left: 42px;
  white-space: nowrap;
}

.group-tree .root {
  gap: 5px;
  padding-left: 8px;
  font-weight: bold;
}

.toggle {
  width: 9px;
  height: 9px;
}

.group-tree a {
  padding: 0 2px;
}

.group-tree .root a {
  padding: 0;
}

.group-tree .selected a {
  padding-right: 18px;
  line-height: 16px;
  background: #4a9ae8;
  color: #fff;
}

/* parameters */
.hint {
  height: 19px;
  padding: 0 4px;
  border-bottom: 1px solid #0a4f94;
  background: linear-gradient(#e3edfb, #b1cbee);
  line-height: 19px;
  flex: none;
}

.toolbar {
  display: flex;
  align-items: center;
  gap: 6px;
  height: 26px;
  padding-left: 3px;
  border-bottom: 1px solid #0a4f94;
  background: linear-gradient(#fdfdfd, #f0f0f0);
  flex: none;
}

.grip {
  width: 2px;
  height: 14px;
  background: repeating-linear-gradient(#b5b5b5 0 2px, transparent 2px 4px);
}

.toolbar button {
  display: flex;
  align-items: center;
  gap: 3px;
  font: 12px Lato, sans-serif;
}

.toolbar .caret {
  margin-left: 3px;
}

.info {
  display: flex;
  align-items: flex-start;
  height: 77px;
  padding: 7px 4px 0 8px;
  border-bottom: 1px solid #0a4f94;
  background: linear-gradient(#ffffe1, #fff);
  flex: none;
}

.info-icon {
  width: 24px;
  height: 24px;
}

.info-text {
  flex: 1;
  padding-left: 12px;
  line-height: 13px;
  white-space: nowrap;
}

.info-text .lead {
  padding: 2px 0 5px;
}

.warning {
  color: #800000;
}

.grid-area {
  flex: 1;
  min-height: 0;
  display: flex;
  padding: 10px 9px 8px;
  background: linear-gradient(#fbfbfb, #e3e3e3);
}

.grid {
  flex: 1;
  display: flex;
  align-items: stretch;
  min-width: 0;
  border: 1px solid #9d9d9d;
  background: #fff;
}

table {
  flex: 1;
  width: 100%;
  height: min-content;
  table-layout: fixed;
  border-collapse: separate;
  border-spacing: 0;
}

.col-name {
  width: 328px;
}

.col-link {
  width: 165px;
}

.col-button {
  width: 25px;
}

th {
  height: 21px;
  padding: 2px 6px 0;
  border-right: 1px solid #e3e3e3;
  border-bottom: 1px solid #9d9d9d;
  font-weight: normal;
  text-align: left;
}

th.sorted {
  background: #b9dcf4;
}

td {
  height: 22px;
  padding: 1px 0 0 2px;
  border-bottom: 1px solid #9d9d9d;
  white-space: nowrap;
}

td:first-child {
  padding-left: 12px;
}

td.nested {
  padding-left: 27px;
}

tbody tr:nth-child(odd) td,
.marked tr:nth-child(even) td {
  background: #e2e2e2;
}

.marked tr:nth-child(odd) td {
  background: #fff;
}

.marked tr.selected td {
  background: #4a9ae8;
  color: #fff;
}

tbody tr td:last-child,
.marked tr.selected td:last-child {
  padding: 0 1px;
  background: #fff;
}

td button {
  display: block;
  width: 23px;
  height: 19px;
  padding-top: 3px;
  border: 1px solid #adadad;
  background: #e1e1e1;
  color: #000;
}

td.changed {
  color: #00f;
  font-weight: bold;
}

.flag {
  display: flex;
  align-items: center;
  gap: 5px;
  margin-left: -2px;
}

/* red frame around the stock parameters */
.marked {
  position: relative;
}

.marked::after {
  content: "";
  position: absolute;
  inset: -3px 0 -6px -2px;
  border: 5px solid #ed1c24;
}

/* status bar */
.statusbar {
  display: grid;
  grid-template-columns: 158px 114px 126px 148px 456px 79px 1fr 12px;
  align-items: center;
  height: 23px;
  padding: 0 3px 0 48px;
  background: #f1f1f1;
  font: 12px Lato, sans-serif;
  white-space: nowrap;
  flex: none;
}

.statusbar span {
  display: flex;
  align-items: center;
  gap: 3px;
}

.statusbar .caret {
  margin-left: 12px;
}

.resize {
  width: 12px;
  height: 12px;
  align-self: end;
}
```
